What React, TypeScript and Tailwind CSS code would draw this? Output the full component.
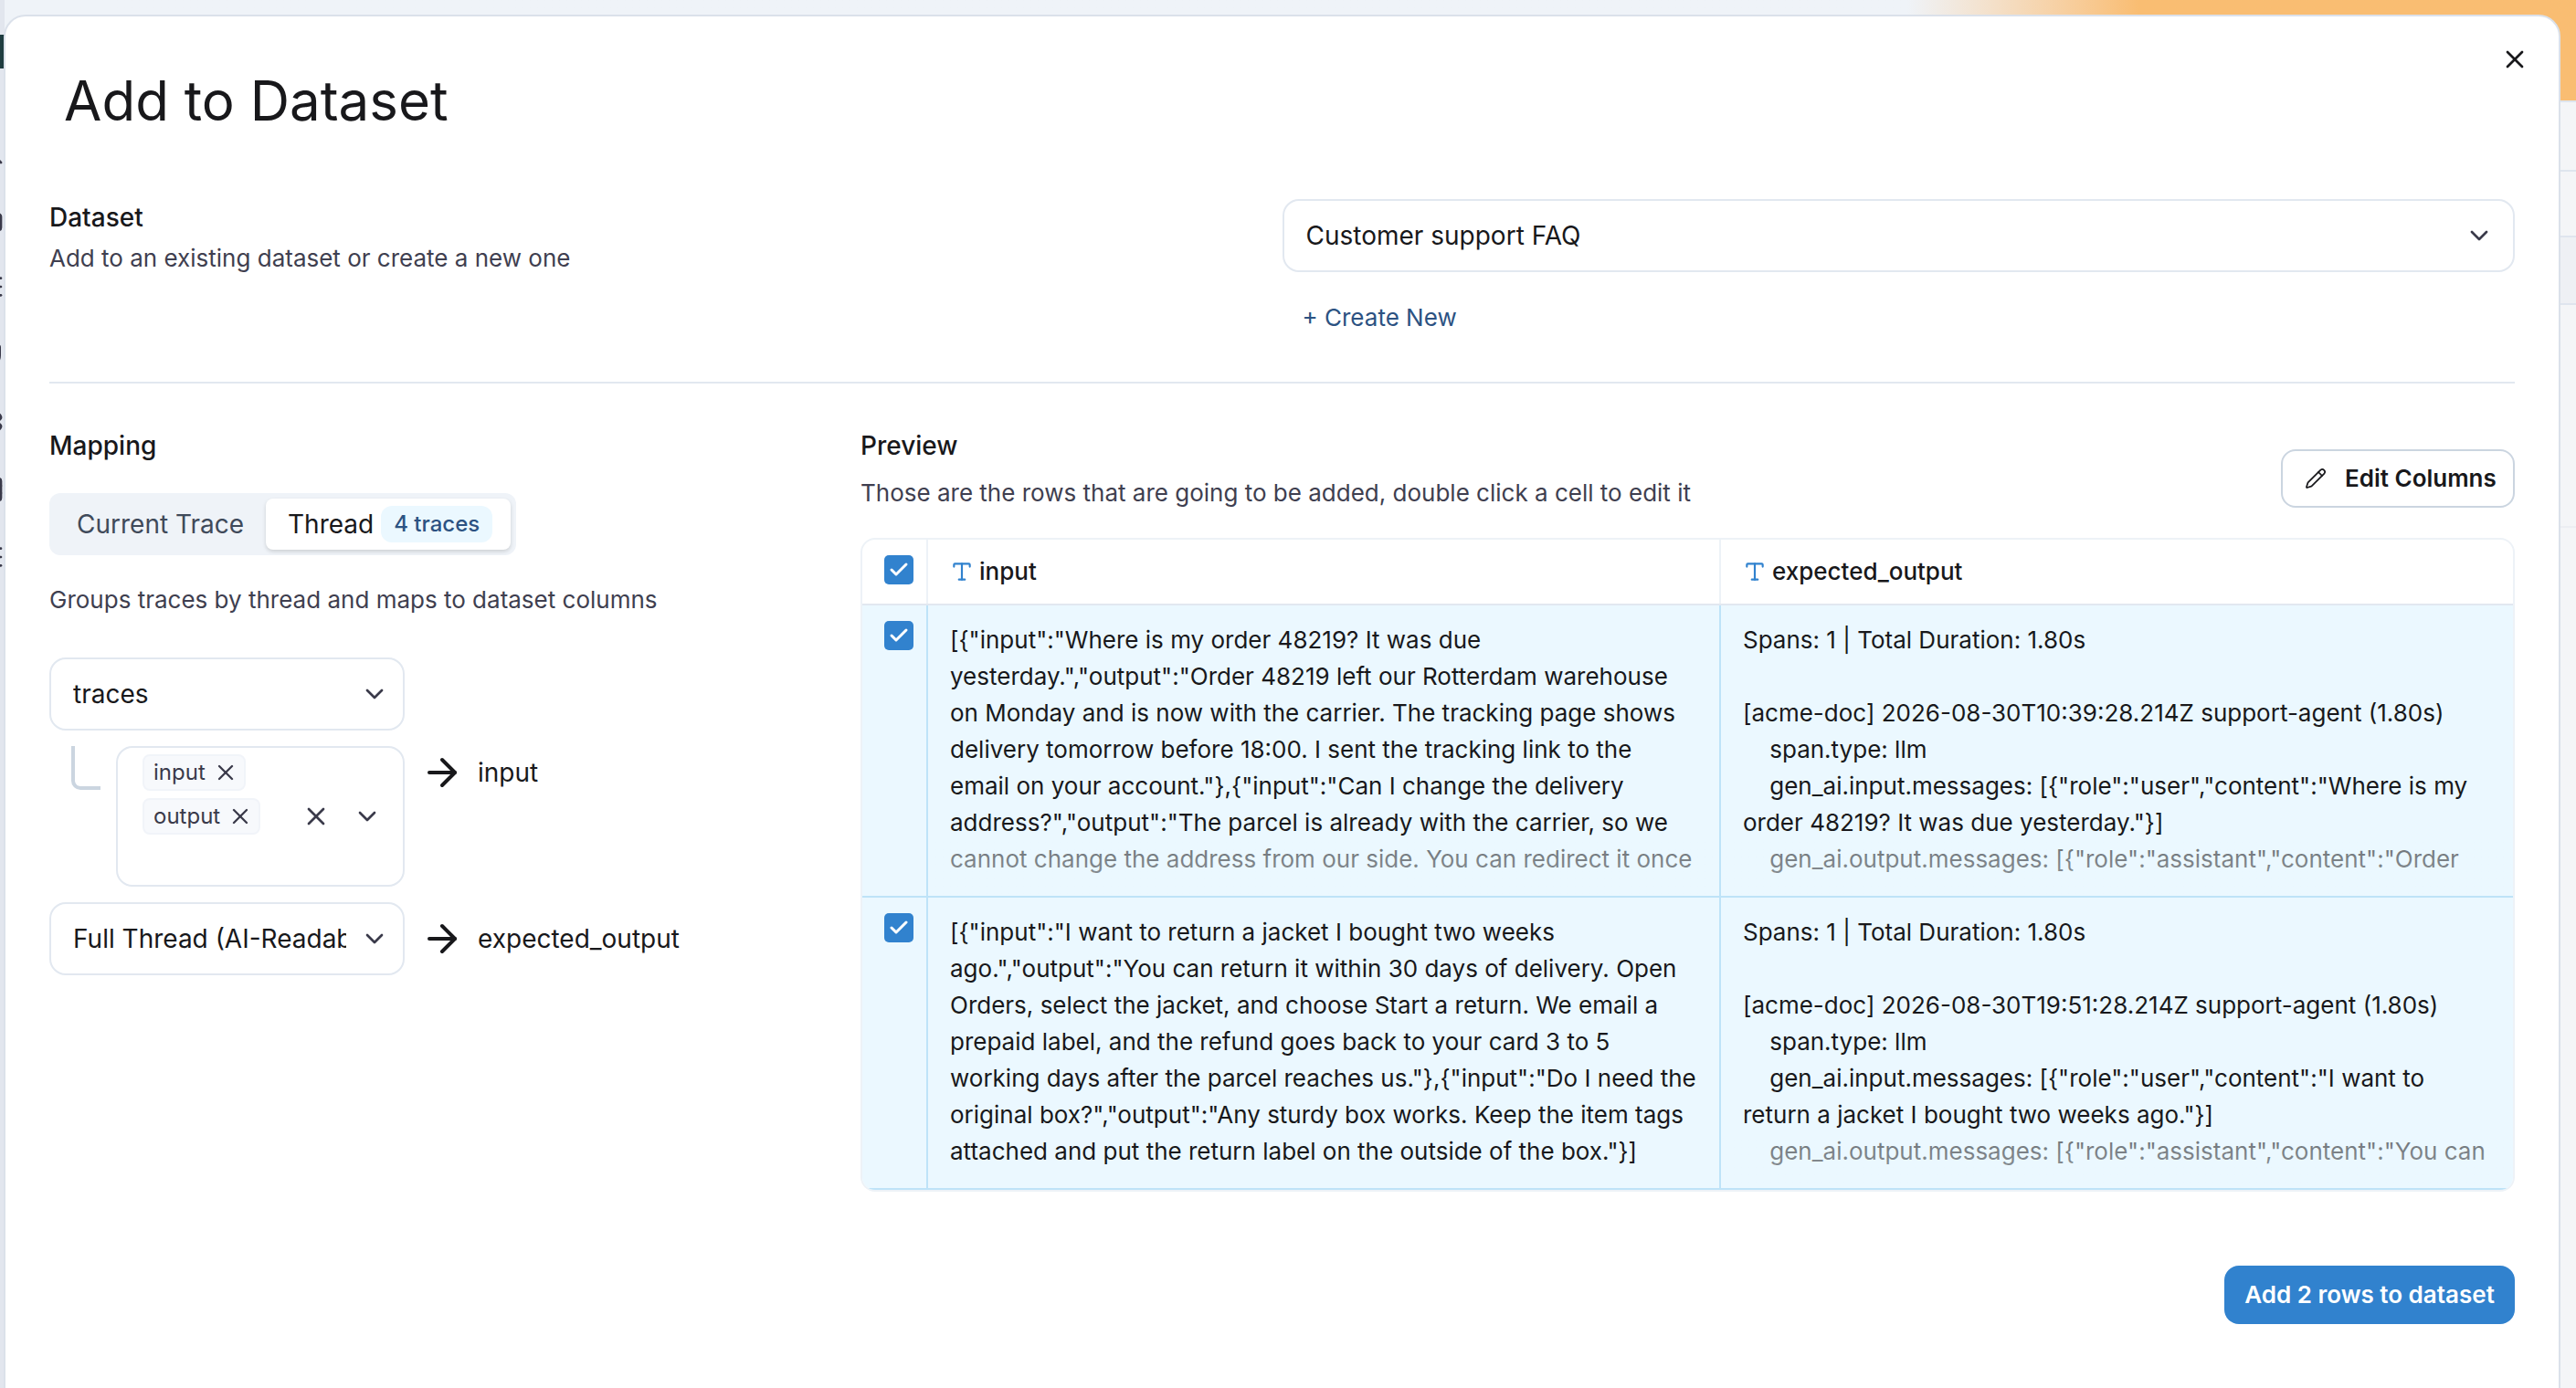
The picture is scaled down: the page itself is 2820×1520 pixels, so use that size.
import { Check, ChevronDown, X, ArrowRight, Pencil, Type, Search, Home, List, Shield, Settings, Table } from "lucide-react"

const rows = [
  {
    input:
      '[{"input":"Where is my order 48219? It was due yesterday.","output":"Order 48219 left our Rotterdam warehouse on Monday and is now with the carrier. The tracking page shows delivery tomorrow before 18:00. I sent the tracking link to the email on your account."},{"input":"Can I change the delivery address?","output":"The parcel is already with the carrier, so we cannot change the address from our side. You can redirect it once',
    inputFade: true,
    output:
      'Spans: 1 | Total Duration: 1.80s\n\n[acme-doc] 2026-08-30T10:39:28.214Z support-agent (1.80s)\n    span.type: llm\n    gen_ai.input.messages: [{"role":"user","content":"Where is my order 48219? It was due yesterday."}]\n    gen_ai.output.messages: [{"role":"assistant","content":"Order',
  },
  {
    input:
      '[{"input":"I want to return a jacket I bought two weeks ago.","output":"You can return it within 30 days of delivery. Open Orders, select the jacket, and choose Start a return. We email a prepaid label, and the refund goes back to your card 3 to 5 working days after the parcel reaches us."},{"input":"Do I need the original box?","output":"Any sturdy box works. Keep the item tags attached and put the return label on the outside of the box."}]',
    inputFade: false,
    output:
      'Spans: 1 | Total Duration: 1.80s\n\n[acme-doc] 2026-08-30T19:51:28.214Z support-agent (1.80s)\n    span.type: llm\n    gen_ai.input.messages: [{"role":"user","content":"I want to return a jacket I bought two weeks ago."}]\n    gen_ai.output.messages: [{"role":"assistant","content":"You can',
  },
]

function CheckBox() {
  return (
    <div className="flex h-8 w-8 items-center justify-center rounded-[5px] bg-[#3182ce]">
      <Check size={24} strokeWidth={3} className="text-white" />
    </div>
  )
}

function Fade() {
  return <div className="absolute inset-x-0 bottom-0 h-[60px] bg-linear-to-b from-[#ebf8ff]/40 to-[#ebf8ff]/60" />
}

function SelectBox({ label, textClass, className }: { label: string; textClass?: string; className: string }) {
  return (
    <div className={`flex h-[80px] items-center rounded-[18px] border-2 border-[#e2e8f0] bg-white pl-6 ${className}`}>
      <span className={`overflow-hidden whitespace-nowrap text-[#18181b] ${textClass ?? ""}`}>{label}</span>
      <ChevronDown size={32} className="ml-auto flex-none text-[#3a3a4a]" />
    </div>
  )
}

function Chip({ label }: { label: string }) {
  return (
    <div className="flex h-10 items-center rounded-[8px] border-2 border-[#f1f4f9] bg-[#f7f9fc] pl-[10px] pr-[6px] text-[24px] leading-[32px] text-[#3a3a4a]">
      {label}
      <X size={28} className="ml-[8px]" strokeWidth={2} />
    </div>
  )
}

function Background() {
  return (
    <div className="flex h-[1520px] w-[2820px] bg-[#f4f5f7]">
      <div className="flex w-[5px] flex-none flex-col items-end overflow-hidden bg-[#e2e6ee] pt-[38px]">
        <div className="h-[37px] w-[5px] flex-none bg-[#1f3d40]" />
        <div className="mt-[75px] flex flex-col items-end gap-[42px] text-[#3a3a4a]">
          <Search size={32} className="flex-none" />
          <Home size={32} className="flex-none" />
          <List size={32} className="flex-none" />
          <Shield size={32} className="flex-none" />
          <Settings size={32} className="flex-none" />
          <Table size={32} className="flex-none" />
          <List size={32} className="flex-none" />
        </div>
      </div>
      <div className="flex flex-1 flex-col">
        <div className="h-[112px] border-b-2 border-[#dfe5ee] bg-linear-to-r from-[#eff3f8] from-[74%] to-[#f9bd72] to-[83%]" />
        <div className="h-[76px] border-b-2 border-[#dfe5ee]" />
        <div className="h-[72px] border-b-2 border-[#dfe5ee]" />
        <div className="h-[74px] border-b-2 border-[#dfe5ee] bg-[#eef0f4]" />
        <div className="h-[244px] border-b-2 border-[#eceef2]" />
      </div>
    </div>
  )
}

export default function App() {
  return (
    <div className="relative h-[1520px] w-[2820px] overflow-hidden font-['Inter',sans-serif] text-[28px] leading-[40px] text-[#18181b]">
      <Background />

      {/* dialog sits over the page */}
      <div className="absolute left-[4px] top-[16px] h-[1560px] w-[2799px] rounded-[24px] border-2 border-[#dbe1ea] bg-white">
        <button className="absolute right-[32px] top-[31px] text-[#18181b]">
          <X size={32} />
        </button>

        <div className="pl-[64px] pt-[56px] text-[60px] leading-[72px]">Add to Dataset</div>

        <div className="px-[48px] pt-[72px]">
          <div className="grid grid-cols-2">
            <div>
              <div className="font-medium">Dataset</div>
              <div className="mt-[5px] text-[26px] text-[#3f3f50]">Add to an existing dataset or create a new one</div>
            </div>
            <div>
              <SelectBox label="Customer support FAQ" className="pr-[21px]" />
              <div className="mt-[30px] pl-[22px] text-[26px] text-[#2c5282]">+ Create New</div>
            </div>
          </div>

          <div className="mt-[50px] h-[2px] bg-[#e2e8f0]" />

          <div className="mt-[48px] flex">
            {/* mapping */}
            <div className="w-[888px] flex-none">
              <div className="font-medium">Mapping</div>
              <div className="mt-[32px] flex h-[68px] w-[511px] items-center justify-between rounded-[12px] bg-[#eff3f8] pl-[30px] pr-[6px] text-[#3f4a5a]">
                Current Trace
                <div className="flex h-14 w-[268px] items-center rounded-[8px] bg-white pl-6 text-[#18181b] shadow-[0_2px_4px_rgba(0,0,0,0.15)]">
                  Thread
                  <span className="ml-2 flex h-10 items-center rounded-[12px] bg-[#ebf8ff] px-[14px] text-[24px] font-medium text-[#2c5282]">
                    4 traces
                  </span>
                </div>
              </div>
              <div className="mt-[29px] text-[26px] text-[#3f3f50]">Groups traces by thread and maps to dataset columns</div>

              <SelectBox label="traces" className="mt-[43px] w-[389px] pr-[15px]" />

              <div className="mt-[17px] flex items-start">
                <div className="ml-6 h-12 w-8 flex-none rounded-bl-[10px] border-b-4 border-l-4 border-[#cbd5e0]" />
                <div className="ml-[17px] flex h-[154px] w-[316px] flex-none flex-col gap-2 rounded-[18px] border-2 border-[#e2e8f0] pl-[27px] pr-[23px] pt-[7px]">
                  <div className="flex">
                    <Chip label="input" />
                  </div>
                  <div className="flex items-center">
                    <Chip label="output" />
                    <X size={32} className="ml-auto text-[#3a3a4a]" />
                    <ChevronDown size={32} className="ml-6 text-[#3a3a4a]" />
                  </div>
                </div>
                <div className="ml-[17px] mt-[5px] flex items-center gap-[15px]">
                  <ArrowRight size={48} strokeWidth={2} />
                  <span>input</span>
                </div>
              </div>

              <div className="mt-[17px] flex items-center">
                <SelectBox label="Full Thread (AI-Readable)" textClass="w-[299px] flex-none" className="w-[389px] flex-none pr-[15px]" />
                <div className="ml-[17px] flex items-center gap-[15px]">
                  <ArrowRight size={48} strokeWidth={2} />
                  <span>expected_output</span>
                </div>
              </div>
            </div>

            {/* preview */}
            <div className="flex-1">
              <div className="flex items-end justify-between">
                <div>
                  <div className="font-medium">Preview</div>
                  <div className="mt-[12px] text-[26px] text-[#3f3f50]">Those are the rows that are going to be added, double click a cell to edit it</div>
                </div>
                <button className="mb-1 flex h-16 w-[256px] items-center rounded-[16px] border-2 border-[#cbd5e0] pl-[24px] text-[26px] font-semibold">
                  <Pencil size={24} strokeWidth={1.75} />
                  <span className="ml-[20px]">Edit Columns</span>
                </button>
              </div>

              <div className="mt-[29px] overflow-hidden rounded-[16px] border-2 border-[#edf2f7] text-[26px]">
                <div className="flex h-[72px] border-b-2 border-[#e2e8f0]">
                  <div className="w-[72px] flex-none border-r-2 border-[#edf2f7] pl-6 pt-[17px]">
                    <CheckBox />
                  </div>
                  <div className="flex w-[868px] flex-none items-center border-r-2 border-[#edf2f7] pl-6 font-medium">
                    <Type size={26} strokeWidth={2} className="mr-[6px] text-[#3182ce]" />
                    input
                  </div>
                  <div className="flex flex-1 items-center pl-6 font-medium">
                    <Type size={26} strokeWidth={2} className="mr-[6px] text-[#3182ce]" />
                    expected_output
                  </div>
                </div>
                {rows.map((row, i) => (
                  <div key={i} className="flex h-[320px] border-b-2 border-[#bee3f8] bg-[#ebf8ff]">
                    <div className="w-[72px] flex-none border-r-2 border-[#bee3f8] pl-6 pt-[17px]">
                      <CheckBox />
                    </div>
                    <div className="relative w-[868px] flex-none overflow-hidden border-r-2 border-[#bee3f8] pl-6 pr-[25px] pt-[18px]">
                      {row.input}
                      {row.inputFade && <Fade />}
                    </div>
                    <div className="relative flex-1 overflow-hidden whitespace-pre-wrap px-6 pt-[18px]">
                      {row.output}
                      <Fade />
                    </div>
                  </div>
                ))}
              </div>
            </div>
          </div>

          <div className="mt-[81px] flex justify-end">
            <button className="flex h-16 w-[318px] items-center justify-center rounded-[16px] bg-[#3182ce] text-[26px] font-semibold text-white">
              Add 2 rows to dataset
            </button>
          </div>
        </div>
      </div>
    </div>
  )
}
